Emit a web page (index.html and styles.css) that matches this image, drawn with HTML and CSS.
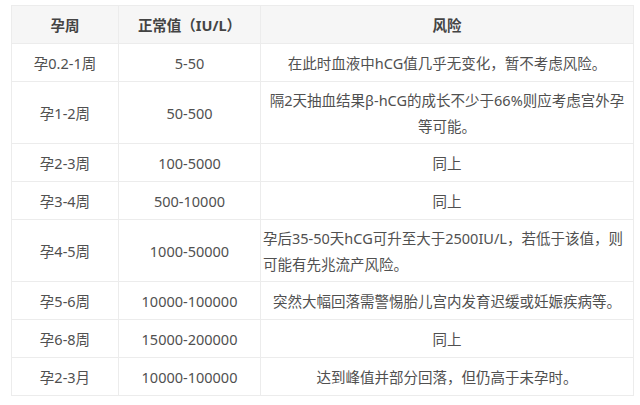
FILE: index.html
```html
<!DOCTYPE html>
<html lang="zh-CN">
<head>
<meta charset="utf-8">
<title>hCG 正常值</title>
<link rel="stylesheet" href="styles.css">
</head>
<body>
<table class="hcg-table">
  <colgroup>
    <col class="col-week">
    <col class="col-value">
    <col class="col-risk">
  </colgroup>
  <thead>
    <tr><th>孕周</th><th>正常值（IU/L）</th><th>风险</th></tr>
  </thead>
  <tbody>
    <tr><td>孕0.2-1周</td><td>5-50</td><td>在此时血液中hCG值几乎无变化，暂不考虑风险。</td></tr>
    <tr class="tall"><td>孕1-2周</td><td>50-500</td><td>隔2天抽血结果β-hCG的成长不少于66%则应考虑宫外孕<br>等可能。</td></tr>
    <tr><td>孕2-3周</td><td>100-5000</td><td>同上</td></tr>
    <tr><td>孕3-4周</td><td>500-10000</td><td>同上</td></tr>
    <tr class="tall"><td>孕4-5周</td><td>1000-50000</td><td class="left">孕后35-50天hCG可升至大于2500IU/L，若低于该值，则<br>可能有先兆流产风险。</td></tr>
    <tr><td>孕5-6周</td><td>10000-100000</td><td>突然大幅回落需警惕胎儿宫内发育迟缓或妊娠疾病等。</td></tr>
    <tr><td>孕6-8周</td><td>15000-200000</td><td>同上</td></tr>
    <tr><td>孕2-3月</td><td>10000-100000</td><td>达到峰值并部分回落，但仍高于未孕时。</td></tr>
  </tbody>
</table>
</body>
</html>
```
FILE: styles.css
```css
html, body {
  margin: 0;
  padding: 0;
  background: #ffffff;
}
body {
  padding: 5px 0 0 11px;
  font-family: "Noto Sans", "Noto Sans CJK SC", sans-serif;
  font-size: 14.5px;
  color: #505050;
}
.hcg-table {
  width: 622px;
  border-collapse: collapse;
  table-layout: fixed;
  border: 1px solid #ececec;
}
.col-week { width: 107px; }
.col-value { width: 142px; }
.col-risk { width: 373px; }
.hcg-table th,
.hcg-table td {
  border: 1px solid #ececec;
  text-align: center;
  vertical-align: middle;
  line-height: 24px;
  padding: 7px 4px 6px;
  white-space: nowrap;
}
.hcg-table .tall td {
  line-height: 26px;
  padding-top: 5px;
  padding-bottom: 4px;
}
.hcg-table th {
  background: #f6f6f6;
  font-weight: bold;
  color: #444444;
}
.hcg-table td.left {
  text-align: left;
  padding-left: 2px;
  padding-right: 0;
}
```
